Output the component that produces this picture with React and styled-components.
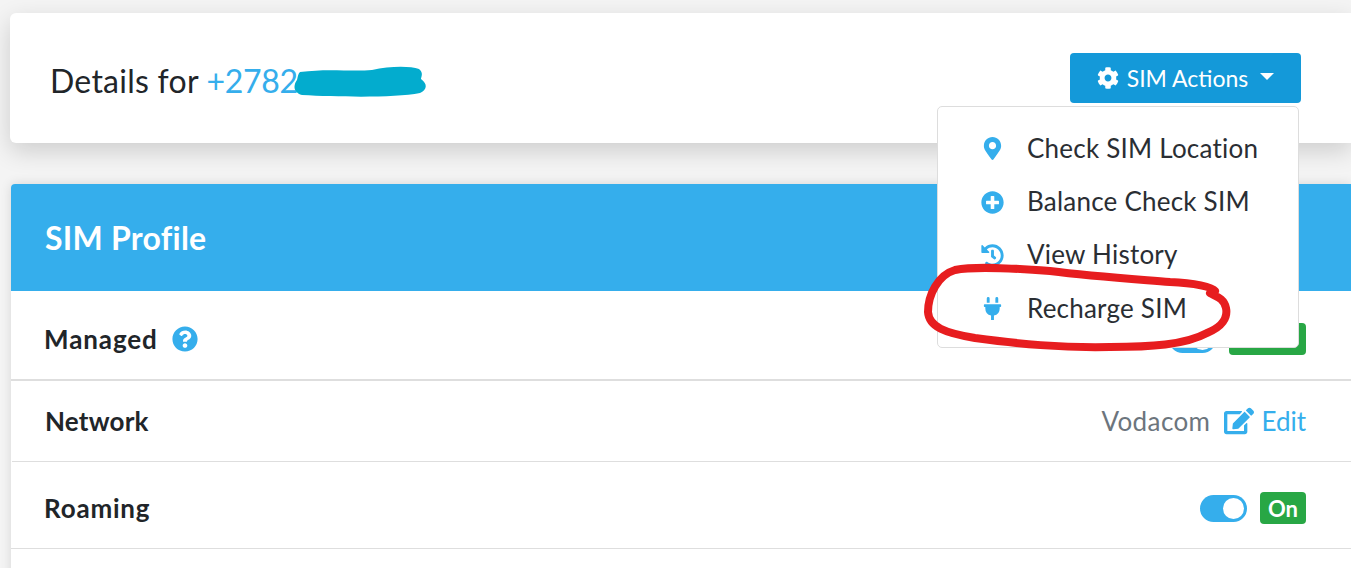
import React from 'react';
import styled, { createGlobalStyle } from 'styled-components';
import { FaCog, FaMapMarkerAlt, FaPlusCircle, FaHistory, FaPlug, FaQuestionCircle, FaEdit } from 'react-icons/fa';

const GlobalStyle = createGlobalStyle`
  html, body {
    margin: 0;
    height: 100%;
    overflow: hidden;
    background: #f4f4f4;
    font-family: "Lato", "Open Sans", sans-serif;
    color: #212529;
  }
`;

const menuItems = [
  { icon: FaMapMarkerAlt, label: 'Check SIM Location' },
  { icon: FaPlusCircle, label: 'Balance Check SIM' },
  { icon: FaHistory, label: 'View History' },
  { icon: FaPlug, label: 'Recharge SIM' },
];

export default function App() {
  return (
    <Page>
      <GlobalStyle />
      <DetailsCard>
        <Title>
          Details for <Phone>+2782</Phone>
        </Title>
        <ActionsWrap>
          <ActionsButton>
            <FaCog size={22} />
            <span>SIM Actions</span>
            <Caret />
          </ActionsButton>
          <Menu>
            {menuItems.map(({ icon: Icon, label }) => (
              <MenuItem key={label}>
                <MenuIcon>
                  <Icon />
                </MenuIcon>
                <MenuLabel>{label}</MenuLabel>
              </MenuItem>
            ))}
          </Menu>
        </ActionsWrap>
      </DetailsCard>

      <Panel>
        <PanelHeader>SIM Profile</PanelHeader>
        <Row $height={90} $thick $shift={8}>
          <Label $spacing={0.9}>
            Managed
            <HelpIcon>
              <FaQuestionCircle />
            </HelpIcon>
          </Label>
          <Controls>
            <Toggle />
            <Badge $width={77} />
          </Controls>
        </Row>
        <Row $height={81} $inset>
          <Label $spacing={0.2}>Network</Label>
          <Controls>
            <Value>Vodacom</Value>
            <EditLink>
              <FaEdit size={30} />
              Edit
            </EditLink>
          </Controls>
        </Row>
        <Row $height={87} $shift={6}>
          <Label $spacing={0.8}>Roaming</Label>
          <Controls>
            <Toggle />
            <Badge $width={46}>On</Badge>
          </Controls>
        </Row>
        <Row $height={40} $last />
      </Panel>

      <Scribbles viewBox="0 0 1351 568">
        <path
          d="M300 72 C330 68 350 72 372 70 C390 66 410 66 419 69 C424 73 421 77 421 79 C428 84 427 90 420 93 C395 98 340 97 302 95 C292 92 294 84 297 80 C298 76 298 74 300 72 Z"
          fill="#03acce"
        />
        <path
          d="M1215 291 C1212 287 1195 283 1170 282 C1120 278 1090 276 1050 271 C1010 268 975 266 955 270 C938 275 928 295 928 312 C929 327 945 333 975 338 C1020 344 1060 348 1110 347 C1150 347 1185 345 1207 333 C1222 327 1228 318 1226 308 C1224 298 1215 296 1210 293"
          fill="none"
          stroke="#e71d1f"
          strokeWidth="8"
          strokeLinecap="round"
        />
      </Scribbles>
    </Page>
  );
}

const Page = styled.div`
  position: relative;
  width: 1351px;
  height: 568px;
  overflow: hidden;
  padding: 13px 0 0 10px;
  box-sizing: border-box;
`;

const DetailsCard = styled.div`
  position: relative;
  z-index: 1;
  display: flex;
  align-items: center;
  justify-content: space-between;
  height: 130px;
  padding: 0 50px 0 40px;
  box-sizing: border-box;
  background: #fff;
  border-radius: 6px 0 0 6px;
  box-shadow: 0 8px 24px rgba(0, 0, 0, 0.16);
`;

const Title = styled.h1`
  margin: 5px 0 0;
  font-size: 32px;
  font-weight: 400;
  line-height: 1;
  letter-spacing: 0.25px;
`;

const Phone = styled.span`
  color: #35aeec;
  letter-spacing: -0.3px;
`;

const ActionsWrap = styled.div`
  position: relative;
`;

const ActionsButton = styled.button`
  display: flex;
  align-items: center;
  justify-content: center;
  gap: 8px;
  width: 231px;
  height: 50px;
  padding: 0;
  border: 0;
  border-radius: 4px;
  background: #1499d9;
  color: #fff;
  font: inherit;
  font-size: 23px;
`;

const Caret = styled.i`
  width: 0;
  height: 0;
  margin-left: 4px;
  margin-top: -3px;
  border-style: solid;
  border-width: 7px 7px 0;
  border-color: #fff transparent transparent;
`;

const Menu = styled.ul`
  position: absolute;
  top: 53px;
  right: 2px;
  width: 362px;
  height: 242px;
  margin: 0;
  padding: 15px 0 0;
  box-sizing: border-box;
  list-style: none;
  background: #fff;
  border: 1px solid #ddd;
  border-radius: 5px;
`;

const MenuItem = styled.li`
  display: flex;
  align-items: center;
  height: 53.4px;
  font-size: 26px;
  letter-spacing: 0.22px;
  color: #2a2e33;
`;

const MenuIcon = styled.span`
  display: flex;
  justify-content: center;
  width: 24px;
  margin: 0 23px 0 42px;
  color: #35aeec;
  font-size: 23px;
`;

const MenuLabel = styled.span`
  margin-top: -2px;
`;

const Panel = styled.section`
  margin: 41px 0 0 1px;
  background: #fff;
  border-radius: 4px 0 0 0;
  box-shadow: 0 0 12px rgba(0, 0, 0, 0.12);
`;

const PanelHeader = styled.h2`
  display: flex;
  align-items: center;
  height: 107px;
  margin: 0;
  padding-left: 34px;
  background: #35aeec;
  border-radius: 4px 0 0 0;
  color: #fff;
  font-size: 32px;
  font-weight: 700;
  letter-spacing: 0.25px;
`;

const Row = styled.div`
  display: flex;
  align-items: center;
  justify-content: space-between;
  height: ${(p) => p.$height}px;
  margin-left: ${(p) => (p.$inset ? 1 : 0)}px;
  padding: ${(p) => p.$shift || 0}px 45px 0 33px;
  box-sizing: border-box;
  background: #fff;
  border-bottom: ${(p) => (p.$last ? 0 : p.$thick ? 2 : 1)}px solid #dedede;
`;

const Label = styled.div`
  display: flex;
  align-items: center;
  font-size: 26px;
  font-weight: 700;
  letter-spacing: ${(p) => p.$spacing}px;
  color: #212529;
`;

const HelpIcon = styled.span`
  display: flex;
  margin-left: 14px;
  color: #35aeec;
`;

const Controls = styled.div`
  display: flex;
  align-items: center;
`;

const Toggle = styled.span`
  position: relative;
  width: 47px;
  height: 27px;
  border-radius: 14px;
  background: #35aeec;

  &::after {
    content: '';
    position: absolute;
    top: 3px;
    right: 3px;
    width: 21px;
    height: 21px;
    border-radius: 50%;
    background: #fff;
  }
`;

const Badge = styled.span`
  display: flex;
  align-items: center;
  justify-content: center;
  width: ${(p) => p.$width}px;
  height: 32px;
  margin-left: 13px;
  border-radius: 4px;
  background: #28a745;
  color: #fff;
  font-size: 22px;
  font-weight: 700;
`;

const Value = styled.span`
  font-size: 26px;
  letter-spacing: 0.4px;
  color: #6c757d;
`;

const EditLink = styled.a`
  display: flex;
  align-items: center;
  gap: 7px;
  margin-left: 14px;
  font-size: 26px;
  color: #35aeec;
`;

const Scribbles = styled.svg`
  position: absolute;
  z-index: 2;
  top: 0;
  left: 0;
  width: 1351px;
  height: 568px;
  pointer-events: none;
`;
